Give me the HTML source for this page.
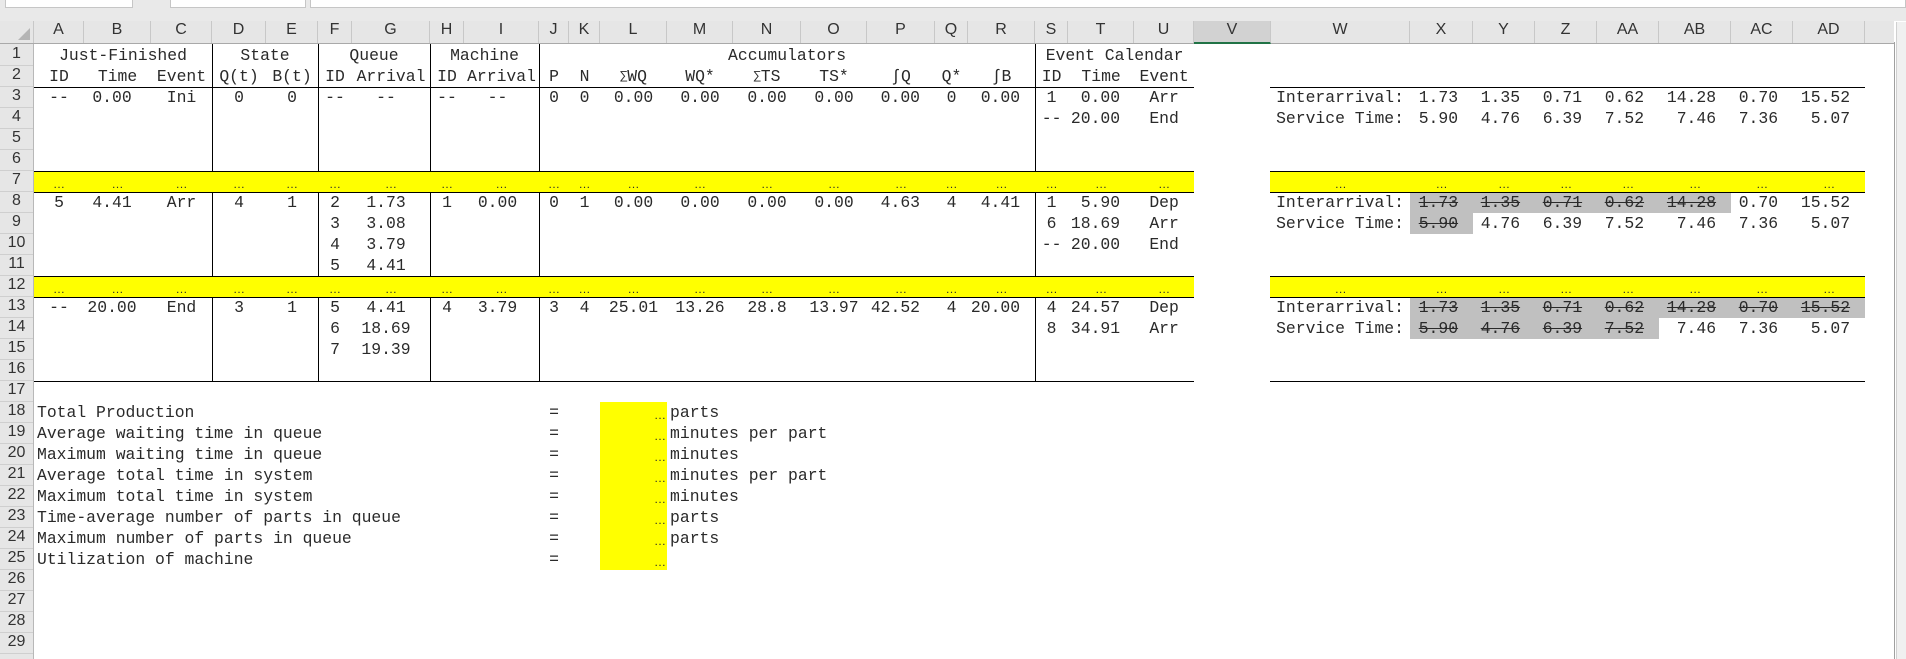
<!DOCTYPE html>
<html><head><meta charset="utf-8">
<style>
*{margin:0;padding:0;box-sizing:border-box}
body{width:1906px;height:659px;overflow:hidden;background:#fff;position:relative;font-family:"Liberation Mono",monospace}
.top{position:absolute;left:0;top:0;width:1906px;height:21px;background:#e9e9e9}
.box{position:absolute;top:0;height:8px;background:#fff;border:1px solid #c6c6c6;border-top:none}
.colhdr{position:absolute;left:0;top:21px;width:1894px;height:23px;background:#e6e6e6;border-bottom:1px solid #a9a9a9}
.ch{position:absolute;top:0;height:22px;line-height:24px;text-align:center;font:16px "Liberation Sans",sans-serif;color:#333;border-right:1px solid #c8c8c8}
.rowhdr{position:absolute;left:0;top:44px;width:34px;height:615px;background:#e6e6e6;border-right:1px solid #b8b8b8}
.rh{position:absolute;left:0;width:33px;height:21px;line-height:22px;text-align:center;font:16px "Liberation Sans",sans-serif;color:#333;border-bottom:1px solid #cfcfcf}
.hl{position:absolute;height:1px;background:#000}
.vl{position:absolute;width:1px;background:#000}
.yb{position:absolute;background:#ffff00}
.gb{position:absolute;background:#c0c0c0}
table{position:absolute;left:34px;top:45px;border-collapse:collapse;table-layout:fixed;width:1831px}
td{height:21px;padding:0;text-align:center;white-space:nowrap;font-size:16.4px;line-height:21px;color:#2a2a2a;overflow:visible;vertical-align:middle}
td.b{padding-right:11px}
td.g{padding-right:10px}
td.i{padding-right:8px}
td.t{text-align:right;padding-right:14px}
td.pr{text-align:right;padding-right:15px}
td.x{text-align:right;padding-right:15px}
td.w{text-align:left;padding-left:5px}
td.s{text-decoration:line-through}
td.lab{text-align:left;padding-left:3px}
td.dot{text-align:right;padding-right:1px;font:12px "Liberation Sans",sans-serif;vertical-align:bottom;line-height:16px}
td.un{text-align:left;padding-left:3px}
tr.y td{font:12px "Liberation Sans",sans-serif;vertical-align:bottom;line-height:16px}
</style></head><body>
<div class="top">
<div class="box" style="left:5px;width:128px"></div>
<div class="box" style="left:170px;width:136px"></div>
<div class="box" style="left:310px;width:1596px"></div>
</div>
<div class="colhdr">
<div class="ch" style="left:0;width:34px;border-right:1px solid #c8c8c8"><span style="position:absolute;right:3px;bottom:3px;width:0;height:0;border-left:12px solid transparent;border-bottom:12px solid #b5b5b5"></span></div>
<div class="ch" style="left:34px;width:50px">A</div>
<div class="ch" style="left:84px;width:67px">B</div>
<div class="ch" style="left:151px;width:61px">C</div>
<div class="ch" style="left:212px;width:54px">D</div>
<div class="ch" style="left:266px;width:52px">E</div>
<div class="ch" style="left:318px;width:34px">F</div>
<div class="ch" style="left:352px;width:78px">G</div>
<div class="ch" style="left:430px;width:34px">H</div>
<div class="ch" style="left:464px;width:75px">I</div>
<div class="ch" style="left:539px;width:30px">J</div>
<div class="ch" style="left:569px;width:31px">K</div>
<div class="ch" style="left:600px;width:67px">L</div>
<div class="ch" style="left:667px;width:66px">M</div>
<div class="ch" style="left:733px;width:68px">N</div>
<div class="ch" style="left:801px;width:66px">O</div>
<div class="ch" style="left:867px;width:68px">P</div>
<div class="ch" style="left:935px;width:33px">Q</div>
<div class="ch" style="left:968px;width:67px">R</div>
<div class="ch" style="left:1035px;width:33px">S</div>
<div class="ch" style="left:1068px;width:66px">T</div>
<div class="ch" style="left:1134px;width:60px">U</div>
<div class="ch" style="left:1194px;width:77px;background:#d2d2d2;border-bottom:2px solid #217346;height:23px">V</div>
<div class="ch" style="left:1271px;width:139px">W</div>
<div class="ch" style="left:1410px;width:63px">X</div>
<div class="ch" style="left:1473px;width:62px">Y</div>
<div class="ch" style="left:1535px;width:62px">Z</div>
<div class="ch" style="left:1597px;width:62px">AA</div>
<div class="ch" style="left:1659px;width:72px">AB</div>
<div class="ch" style="left:1731px;width:62px">AC</div>
<div class="ch" style="left:1793px;width:72px">AD</div>
</div>
<div style="position:absolute;left:1894px;top:42px;width:1px;height:617px;background:#a0a0a0"></div>
<div style="position:absolute;left:1896px;top:22px;width:10px;height:637px;background:#f0f0f0;border-left:1px solid #d0d0d0"></div>
<div class="rowhdr">
<div class="rh" style="top:1px">1</div><div class="rh" style="top:22px">2</div><div class="rh" style="top:43px">3</div><div class="rh" style="top:64px">4</div><div class="rh" style="top:85px">5</div><div class="rh" style="top:106px">6</div><div class="rh" style="top:127px">7</div><div class="rh" style="top:148px">8</div><div class="rh" style="top:169px">9</div><div class="rh" style="top:190px">10</div><div class="rh" style="top:211px">11</div><div class="rh" style="top:232px">12</div><div class="rh" style="top:253px">13</div><div class="rh" style="top:274px">14</div><div class="rh" style="top:295px">15</div><div class="rh" style="top:316px">16</div><div class="rh" style="top:337px">17</div><div class="rh" style="top:358px">18</div><div class="rh" style="top:379px">19</div><div class="rh" style="top:400px">20</div><div class="rh" style="top:421px">21</div><div class="rh" style="top:442px">22</div><div class="rh" style="top:463px">23</div><div class="rh" style="top:484px">24</div><div class="rh" style="top:505px">25</div><div class="rh" style="top:526px">26</div><div class="rh" style="top:547px">27</div><div class="rh" style="top:568px">28</div><div class="rh" style="top:589px">29</div>
</div>

<div class="yb" style="left:34px;top:171px;width:1160px;height:21px"></div>
<div class="yb" style="left:1270px;top:171px;width:595px;height:21px"></div>
<div class="yb" style="left:34px;top:276px;width:1160px;height:21px"></div>
<div class="yb" style="left:1270px;top:276px;width:595px;height:21px"></div>
<div class="yb" style="left:600px;top:402px;width:67px;height:168px"></div>
<div class="gb" style="left:1410px;top:192px;width:321px;height:21px"></div>
<div class="gb" style="left:1410px;top:213px;width:63px;height:21px"></div>
<div class="gb" style="left:1410px;top:297px;width:455px;height:21px"></div>
<div class="gb" style="left:1410px;top:318px;width:249px;height:21px"></div>

<div class="hl" style="left:34px;top:87px;width:1160px"></div><div class="hl" style="left:1270px;top:87px;width:595px"></div>
<div class="hl" style="left:34px;top:171px;width:1160px"></div><div class="hl" style="left:1270px;top:171px;width:595px"></div>
<div class="hl" style="left:34px;top:192px;width:1160px"></div><div class="hl" style="left:1270px;top:192px;width:595px"></div>
<div class="hl" style="left:34px;top:276px;width:1160px"></div><div class="hl" style="left:1270px;top:276px;width:595px"></div>
<div class="hl" style="left:34px;top:297px;width:1160px"></div><div class="hl" style="left:1270px;top:297px;width:595px"></div>
<div class="hl" style="left:34px;top:381px;width:1160px"></div><div class="hl" style="left:1270px;top:381px;width:595px"></div>

<div class="vl" style="left:212px;top:44px;height:127px"></div><div class="vl" style="left:212px;top:192px;height:84px"></div><div class="vl" style="left:212px;top:297px;height:84px"></div>
<div class="vl" style="left:318px;top:44px;height:127px"></div><div class="vl" style="left:318px;top:192px;height:84px"></div><div class="vl" style="left:318px;top:297px;height:84px"></div>
<div class="vl" style="left:430px;top:44px;height:127px"></div><div class="vl" style="left:430px;top:192px;height:84px"></div><div class="vl" style="left:430px;top:297px;height:84px"></div>
<div class="vl" style="left:539px;top:44px;height:127px"></div><div class="vl" style="left:539px;top:192px;height:84px"></div><div class="vl" style="left:539px;top:297px;height:84px"></div>
<div class="vl" style="left:1035px;top:44px;height:127px"></div><div class="vl" style="left:1035px;top:192px;height:84px"></div><div class="vl" style="left:1035px;top:297px;height:84px"></div>

<table>
<colgroup>
<col style="width:50px"><col style="width:67px"><col style="width:61px"><col style="width:54px"><col style="width:52px"><col style="width:34px"><col style="width:78px"><col style="width:34px"><col style="width:75px"><col style="width:30px"><col style="width:31px"><col style="width:67px"><col style="width:66px"><col style="width:68px"><col style="width:66px"><col style="width:68px"><col style="width:33px"><col style="width:67px"><col style="width:33px"><col style="width:66px"><col style="width:60px"><col style="width:77px"><col style="width:139px"><col style="width:63px"><col style="width:62px"><col style="width:62px"><col style="width:62px"><col style="width:72px"><col style="width:62px"><col style="width:72px">
</colgroup>
<tr><td colspan="3">Just-Finished</td><td colspan="2">State</td><td colspan="2">Queue</td><td colspan="2">Machine</td><td colspan="9">Accumulators</td><td colspan="3">Event Calendar</td><td colspan="9"></td></tr>
<tr><td>ID</td><td>Time</td><td>Event</td><td>Q(t)</td><td>B(t)</td><td>ID</td><td>Arrival</td><td>ID</td><td>Arrival</td><td>P</td><td>N</td><td><span style="font-size:12px;vertical-align:2px">∑</span>WQ</td><td>WQ*</td><td><span style="font-size:12px;vertical-align:2px">∑</span>TS</td><td>TS*</td><td>∫Q</td><td>Q*</td><td>∫B</td><td>ID</td><td>Time</td><td>Event</td><td colspan="9"></td></tr>
<tr><td>--</td><td class="b">0.00</td><td>Ini</td><td>0</td><td>0</td><td>--</td><td class="g">--</td><td>--</td><td class="i">--</td><td>0</td><td>0</td><td>0.00</td><td>0.00</td><td>0.00</td><td>0.00</td><td class="pr">0.00</td><td>0</td><td class="pr">0.00</td><td>1</td><td class="t">0.00</td><td>Arr</td><td></td><td class="w">Interarrival:</td><td class="x">1.73</td><td class="x">1.35</td><td class="x">0.71</td><td class="x">0.62</td><td class="x">14.28</td><td class="x">0.70</td><td class="x">15.52</td></tr>
<tr><td colspan="18"></td><td>--</td><td class="t">20.00</td><td>End</td><td></td><td class="w">Service Time:</td><td class="x">5.90</td><td class="x">4.76</td><td class="x">6.39</td><td class="x">7.52</td><td class="x">7.46</td><td class="x">7.36</td><td class="x">5.07</td></tr>
<tr><td colspan="30"></td></tr>
<tr><td colspan="30"></td></tr>
<tr class="y"><td>…</td><td>…</td><td>…</td><td>…</td><td>…</td><td>…</td><td>…</td><td>…</td><td>…</td><td>…</td><td>…</td><td>…</td><td>…</td><td>…</td><td>…</td><td>…</td><td>…</td><td>…</td><td>…</td><td>…</td><td>…</td><td></td><td>…</td><td>…</td><td>…</td><td>…</td><td>…</td><td>…</td><td>…</td><td>…</td></tr>
<tr><td>5</td><td class="b">4.41</td><td>Arr</td><td>4</td><td>1</td><td>2</td><td class="g">1.73</td><td>1</td><td class="i">0.00</td><td>0</td><td>1</td><td>0.00</td><td>0.00</td><td>0.00</td><td>0.00</td><td class="pr">4.63</td><td>4</td><td class="pr">4.41</td><td>1</td><td class="t">5.90</td><td>Dep</td><td></td><td class="w">Interarrival:</td><td class="x s">1.73</td><td class="x s">1.35</td><td class="x s">0.71</td><td class="x s">0.62</td><td class="x s">14.28</td><td class="x">0.70</td><td class="x">15.52</td></tr>
<tr><td colspan="5"></td><td>3</td><td class="g">3.08</td><td colspan="11"></td><td>6</td><td class="t">18.69</td><td>Arr</td><td></td><td class="w">Service Time:</td><td class="x s">5.90</td><td class="x">4.76</td><td class="x">6.39</td><td class="x">7.52</td><td class="x">7.46</td><td class="x">7.36</td><td class="x">5.07</td></tr>
<tr><td colspan="5"></td><td>4</td><td class="g">3.79</td><td colspan="11"></td><td>--</td><td class="t">20.00</td><td>End</td><td colspan="9"></td></tr>
<tr><td colspan="5"></td><td>5</td><td class="g">4.41</td><td colspan="23"></td></tr>
<tr class="y"><td>…</td><td>…</td><td>…</td><td>…</td><td>…</td><td>…</td><td>…</td><td>…</td><td>…</td><td>…</td><td>…</td><td>…</td><td>…</td><td>…</td><td>…</td><td>…</td><td>…</td><td>…</td><td>…</td><td>…</td><td>…</td><td></td><td>…</td><td>…</td><td>…</td><td>…</td><td>…</td><td>…</td><td>…</td><td>…</td></tr>
<tr><td>--</td><td class="b">20.00</td><td>End</td><td>3</td><td>1</td><td>5</td><td class="g">4.41</td><td>4</td><td class="i">3.79</td><td>3</td><td>4</td><td>25.01</td><td>13.26</td><td>28.8</td><td>13.97</td><td class="pr">42.52</td><td>4</td><td class="pr">20.00</td><td>4</td><td class="t">24.57</td><td>Dep</td><td></td><td class="w">Interarrival:</td><td class="x s">1.73</td><td class="x s">1.35</td><td class="x s">0.71</td><td class="x s">0.62</td><td class="x s">14.28</td><td class="x s">0.70</td><td class="x s">15.52</td></tr>
<tr><td colspan="5"></td><td>6</td><td class="g">18.69</td><td colspan="11"></td><td>8</td><td class="t">34.91</td><td>Arr</td><td></td><td class="w">Service Time:</td><td class="x s">5.90</td><td class="x s">4.76</td><td class="x s">6.39</td><td class="x s">7.52</td><td class="x">7.46</td><td class="x">7.36</td><td class="x">5.07</td></tr>
<tr><td colspan="5"></td><td>7</td><td class="g">19.39</td><td colspan="23"></td></tr>
<tr><td colspan="30"></td></tr>
<tr><td colspan="30"></td></tr>
<tr><td class="lab">Total Production</td><td colspan="8"></td><td>=</td><td></td><td class="dot">…</td><td class="un">parts</td><td colspan="17"></td></tr>
<tr><td class="lab">Average waiting time in queue</td><td colspan="8"></td><td>=</td><td></td><td class="dot">…</td><td class="un">minutes per part</td><td colspan="17"></td></tr>
<tr><td class="lab">Maximum waiting time in queue</td><td colspan="8"></td><td>=</td><td></td><td class="dot">…</td><td class="un">minutes</td><td colspan="17"></td></tr>
<tr><td class="lab">Average total time in system</td><td colspan="8"></td><td>=</td><td></td><td class="dot">…</td><td class="un">minutes per part</td><td colspan="17"></td></tr>
<tr><td class="lab">Maximum total time in system</td><td colspan="8"></td><td>=</td><td></td><td class="dot">…</td><td class="un">minutes</td><td colspan="17"></td></tr>
<tr><td class="lab">Time-average number of parts in queue</td><td colspan="8"></td><td>=</td><td></td><td class="dot">…</td><td class="un">parts</td><td colspan="17"></td></tr>
<tr><td class="lab">Maximum number of parts in queue</td><td colspan="8"></td><td>=</td><td></td><td class="dot">…</td><td class="un">parts</td><td colspan="17"></td></tr>
<tr><td class="lab">Utilization of machine</td><td colspan="8"></td><td>=</td><td></td><td class="dot">…</td><td class="un"></td><td colspan="17"></td></tr>
<tr><td colspan="30"></td></tr>
<tr><td colspan="30"></td></tr>
<tr><td colspan="30"></td></tr>
<tr><td colspan="30"></td></tr>
</table>
</body></html>
